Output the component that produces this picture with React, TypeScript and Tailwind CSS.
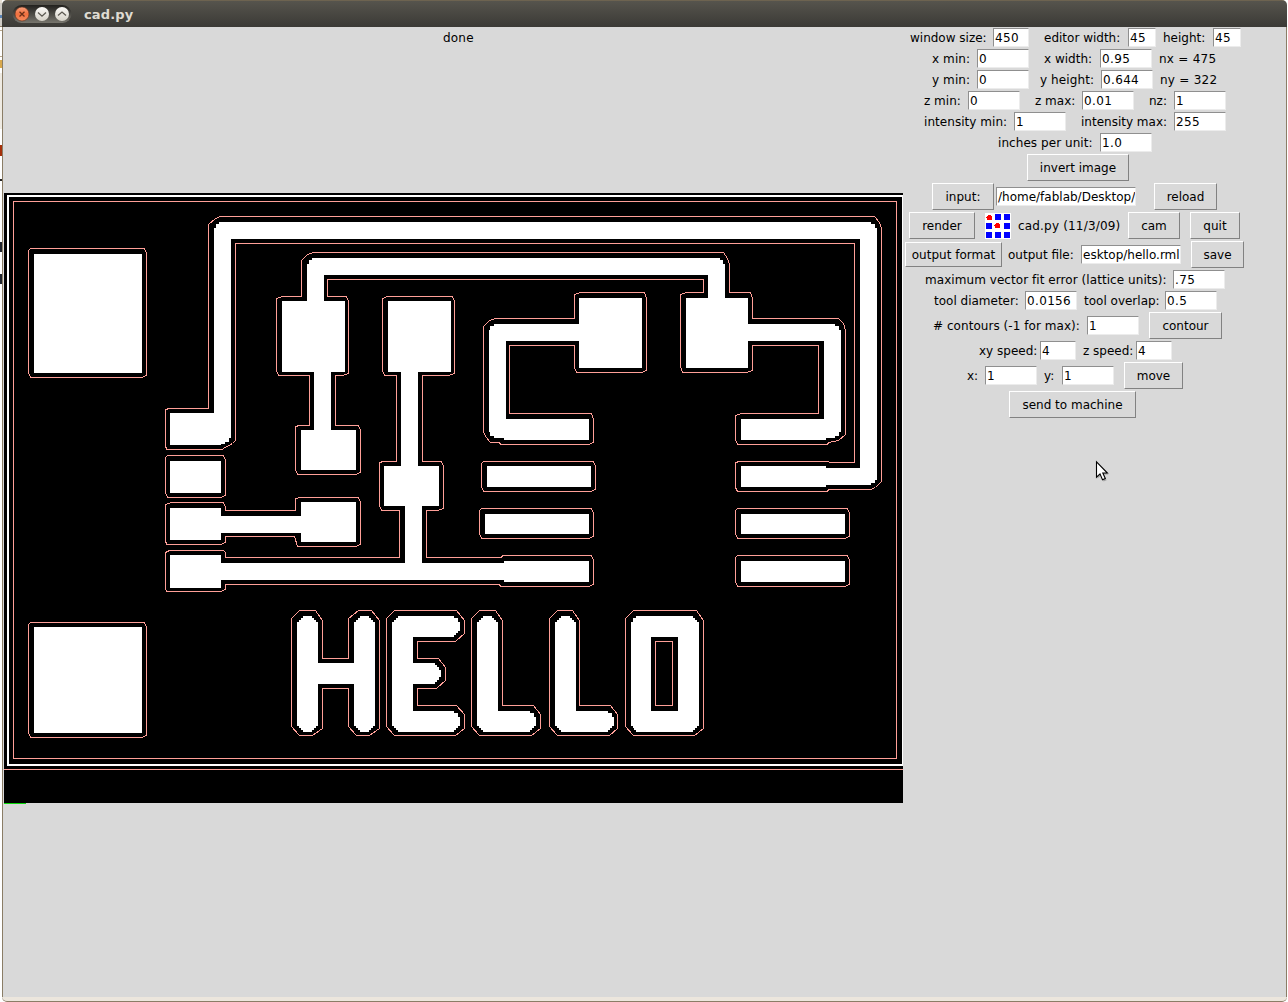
import type { ReactNode } from "react";

function Row({ tall = false, children }: { tall?: boolean; children: ReactNode }) {
  return <div className={`flex shrink-0 items-center ${tall ? "h-[29px]" : "h-[21px]"}`}>{children}</div>;
}

function Label({ className, children }: { className: string; children: ReactNode }) {
  return <span className={`shrink-0 pt-[2px] whitespace-pre ${className}`}>{children}</span>;
}

function Entry({ className, value, path = false }: { className: string; value: string; path?: boolean }) {
  return (
    <div
      className={`flex h-[19px] shrink-0 items-center overflow-hidden border border-t-[#8f8f8f] border-r-[#ececec] border-b-[#ececec] border-l-[#8f8f8f] bg-white px-px pt-[2px] whitespace-pre ${path ? "" : "tracking-[0.35px]"} ${className}`}
    >
      {value}
    </div>
  );
}

function Button({ className, small = false, children }: { className: string; small?: boolean; children: ReactNode }) {
  return (
    <button
      className={`flex shrink-0 items-center justify-center border border-t-white border-r-[#828282] border-b-[#828282] border-l-white bg-[#d9d9d9] pt-[2px] whitespace-pre ${small ? "h-[25px]" : "h-[27px]"} ${className}`}
    >
      {children}
    </button>
  );
}

function LatticeIcon() {
  return (
    <svg className="ml-[10px] size-[26px] shrink-0" viewBox="0 0 26 26" shapeRendering="crispEdges">
      <path fill="#fff" d="M0 0h26v26H0z" />
      <path fill="#00f" d="M10 1h6v6h-6zM19 1h6v6h-6zM1 10h6v6H1zM19 10h6v6h-6zM1 19h6v6H1zM10 19h6v6h-6zM19 19h6v6h-6z" />
      <path fill="#f00" d="M3 2h3v1h1v4H2V5H1V4h1V3h1zM11 10h3v1h1v4h-5v-2H9v-1h1v-1h1z" />
    </svg>
  );
}

const pads: number[][] = [
  [34, 254, 142, 373],
  [34, 627, 142, 733],
  [170, 461, 221, 493],
  [487, 466, 591, 487],
  [485, 514, 589, 534],
  [741, 514, 845, 534],
  [741, 561, 845, 582],
];

const padContours: number[][] = [
  [28, 248, 146, 377],
  [28, 622, 146, 737],
  [165, 455, 225, 497],
  [481, 461, 595, 491],
  [479, 508, 593, 538],
  [735, 508, 849, 538],
  [735, 555, 849, 586],
];

const copper = [
  "M219 222H871V224H875V228H877V480H875V483H871V485H826V487H741V466H826V468H860V239H231V438H229V442H225V444H221V445H170V413H214V228H216V224H219Z",
  "M312 258H720V260H723V264H725V298H748V324H835V326H839V330H841V432H839V436H835V438H826V440H741V419H824V341H748V368H686V298H708V275H324V301H345V372H331V430H356V470H301V430H314V372H282V301H307V264H309V260H312Z",
  "M388 301H451V372H418V466H439V506H422V563H504V561H589V582H504V580H221V588H170V555H221V563H405V506H384V466H401V372H388Z",
  "M579 298H642V368H579V341H506V419H589V440H504V438H494V436H490V432H489V330H490V326H494V324H579Z",
  "M170 508H221V516H301V502H356V542H301V533H221V540H170Z",
];

const contours = [
  "220,216 215,218 208,224 208,408 169,408 165,409 165,445 166,449 222,449 223,448 232,443 235,440 235,243 854,243 854,462 829,462 828,461 739,461 735,462 735,487 737,491 827,491 828,489 870,489 875,487 881,481 881,228 879,222 874,216",
  "313,252 307,254 301,260 301,296 282,296 276,298 276,370 278,375 309,375 309,425 299,425 295,426 295,469 297,474 355,474 360,472 360,430 358,425 335,425 335,375 342,375 348,373 348,301 346,296 327,296 327,279 703,279 703,292 686,292 680,294 680,366 682,372 746,372 752,370 752,345 818,345 818,413 741,413 735,415 735,439 737,444 827,444 828,442 838,440 845,434 845,330 843,323 838,318 752,318 752,298 750,292 729,292 729,264 727,258 723,252",
  "387,296 382,298 382,370 384,375 396,375 396,461 383,461 379,462 379,505 381,510 399,510 399,557 225,557 225,552 223,550 169,550 165,552 165,588 166,591 220,591 225,589 225,584 499,584 500,586 588,586 593,584 593,560 591,555 502,555 501,557 426,557 426,510 437,510 443,508 443,466 441,461 422,461 422,375 448,375 454,373 454,301 452,296",
  "580,292 574,294 574,318 495,318 489,320 483,326 483,431 485,436 490,442 499,442 500,444 588,444 593,442 593,419 591,413 509,413 509,345 574,345 574,367 576,372 641,372 646,370 646,298 644,292",
  "171,502 165,504 165,540 166,544 220,544 225,542 225,536 294,536 297,546 355,546 360,544 360,502 358,497 300,497 295,498 295,510 225,510 225,507 223,502",
  "299,610 291,618 291,726 299,735 312,735 322,728 322,688 348,688 348,726 356,735 369,735 379,728 379,620 371,610 358,610 348,618 348,658 322,658 322,620 315,610",
  "394,610 386,618 386,726 394,735 455,735 464,728 464,714 456,705 417,705 417,688 436,688 445,680 445,667 438,658 417,658 417,641 455,641 464,633 464,620 456,610",
  "479,610 471,618 471,726 479,735 531,735 540,728 540,714 533,705 502,705 502,620 495,610",
  "557,610 549,618 549,726 557,735 609,735 617,728 617,714 610,705 579,705 579,620 572,610",
  "633,610 625,618 625,726 633,735 694,735 703,728 703,620 696,610",
  "655,641 672,641 672,705 655,705",
  "13,201 896,201 896,758 13,758",
];

/* Engraved lettering; every stroke end is stepped in 2px lattice cells. */
const lettering = [
  "M297 622h2v-2h2v-2h2v-2H312v2h2v2h2v2h2V663H354V622h2v-2h2v-2h2v-2H369v2h2v2h2v2h2V726h-2v2h-2v2h-2v2H360v-2h-2v-2h-2v-2h-2V684H318V726h-2v2h-2v2h-2v2H303v-2h-2v-2h-2v-2h-2Z",
  "M392 622h2v-2h2v-2h2v-2H454v2h4v4h2V631h-2v2h-2v2h-2v2H413V663H435v2h2v2h2v3h2V677h-2v3h-2v2h-2v2H413V711H454v2h4v4h2V726h-2v2h-2v2h-2v2H398v-2h-2v-2h-2v-2h-2Z",
  "M477 622h2v-2h2v-2h2v-2H492v2h2v2h2v2h2V711H530v2h4v4h2V726h-2v2h-2v2h-2v2H483v-2h-2v-2h-2v-2h-2Z",
  "M555 622h2v-2h2v-2h2v-2H570v2h2v2h2v2h2V711H608v2h4v4h2V726h-2v2h-2v2h-2v2H561v-2h-2v-2h-2v-2h-2Z",
  "M631 622h2v-4h3v-2H693v2h2v2h2v2h2V726h-2v2h-2v2h-2v2H636v-2h-2v-2h-1v-2h-2ZM651 637V711H678V637Z",
];

function Board() {
  return (
    <svg className="ml-px h-[611px] w-[899px] shrink-0" viewBox="4 193 899 611" shapeRendering="crispEdges">
      <path fill="#000" d="M4 193H903V803H4Z" />
      <path fill="#fff" fillRule="evenodd" d="M7 195H903V766H7ZM9 197V764H902V197Z" />
      <path fill="#0bd80b" d="M4 803H26V804H4Z" />
      <g fill="#fff" fillRule="evenodd">
        {pads.map(([x0, y0, x1, y1]) => (
          <rect key={`${x0}-${y0}`} x={x0} y={y0} width={x1 - x0} height={y1 - y0} />
        ))}
        {copper.map((d) => (
          <path key={d} d={d} />
        ))}
        {lettering.map((d) => (
          <path key={d} d={d} />
        ))}
      </g>
      <g fill="none" stroke="#ff9f98" transform="translate(.5 .5)">
        <path d="M3.5 769H903" />
        {contours.map((points) => (
          <polygon key={points} points={points} />
        ))}
        {padContours.map(([x0, y0, x1, y1]) => (
          <path
            key={`${x0}-${y0}`}
            d={`M${x0 + 2} ${y0}H${x1 - 2}L${x1} ${y0 + 5}V${y1 - 2}L${x1 - 5} ${y1}H${x0 + 2}L${x0} ${y1 - 5}V${y0 + 2}Z`}
          />
        ))}
      </g>
    </svg>
  );
}

function WindowControls() {
  return (
    <svg className="ml-[10px] h-[20px] w-[60px] shrink-0" viewBox="12 4 60 20">
      <defs>
        <linearGradient id="well" x2="0" y2="1">
          <stop stopColor="#22211e" />
          <stop offset="1" stopColor="#77756d" />
        </linearGradient>
        <linearGradient id="close" x2="0" y2="1">
          <stop stopColor="#f8a07c" />
          <stop offset=".5" stopColor="#f0703f" />
          <stop offset="1" stopColor="#f58a5c" />
        </linearGradient>
        <linearGradient id="plain" x2="0" y2="1">
          <stop stopColor="#fbfaf7" />
          <stop offset="1" stopColor="#d5d1c7" />
        </linearGradient>
      </defs>
      <rect x="12.5" y="5" width="59" height="18" rx="9" fill="url(#well)" />
      <circle cx="22" cy="14" r="7" fill="url(#close)" stroke="#5a2b17" strokeWidth=".6" />
      <circle cx="42" cy="14" r="7" fill="url(#plain)" />
      <circle cx="62" cy="14" r="7" fill="url(#plain)" />
      <g fill="none" stroke="#5d5a52" strokeWidth="1.3">
        <path d="M19.5 11.7l5 4.8M24.5 11.7l-5 4.8" stroke="#6b3018" />
        <path d="M38 12.6l4 3.6 4-3.6M58 15.6l4-3.6 4 3.6" />
      </g>
    </svg>
  );
}

/* Sliver of the window lying behind this one, visible past the left frame. */
function BackWindowEdge() {
  return (
    <div className="flex w-[2px] shrink-0 flex-col bg-white">
      <div className="h-[3px] bg-[#e7e0d4]" />
      <div className="h-[12px] bg-[#cfccc6]" />
      <div className="h-[3px] bg-[#5b84b4]" />
      <div className="h-[8px] bg-[#cfccc6]" />
      <div className="h-px bg-[#8d7f68]" />
      <div className="h-[3px] bg-white" />
      <div className="h-px bg-[#b7a78d]" />
      <div className="h-[25px] bg-white" />
      <div className="h-px bg-[#b7a78d]" />
      <div className="h-[3px] bg-white" />
      <div className="h-[8px] bg-[#d9a94d]" />
      <div className="h-[5px] bg-white" />
      <div className="h-[56px] bg-[#efebe3]" />
      <div className="h-[16px] bg-white" />
      <div className="h-[11px] bg-[#a5300a]" />
      <div className="h-[23px] bg-white" />
      <div className="h-[2px] bg-[#222222]" />
      <div className="h-[61px] bg-white" />
      <div className="h-[10px] bg-[#20242c]" />
      <div className="h-[22px] bg-white" />
      <div className="h-[10px] bg-[#20242c]" />
    </div>
  );
}

export default function App() {
  return (
    <div className="relative flex h-[1002px] w-[1288px] overflow-hidden bg-white font-['DejaVu_Sans',sans-serif] text-[12px] leading-[17px] text-black">
      <BackWindowEdge />
      <div className="flex w-[1285px] shrink-0 flex-col overflow-hidden rounded-t-[5px] rounded-b-[5px] border-b border-[#8a7d66] bg-[#ece6dd]">
        <header className="flex h-[27px] shrink-0 items-center border-t border-[#6d6350] bg-linear-to-b from-[#56544d] to-[#3b3a36]">
          <WindowControls />
          <span className="ml-[12px] text-[13px] font-bold tracking-[0.15px] text-[#dfdbd2]">cad.py</span>
        </header>
        <main className="flex h-[970px] shrink-0 border-x border-[#8a7d66] bg-[#d9d9d9]">
          <section className="flex w-[900px] shrink-0 flex-col">
            <div className="flex h-[21px] items-center pt-[2px] pl-[440px] tracking-[0.2px]">done</div>
            <div className="h-[145px] shrink-0" />
            <Board />
          </section>

          <section className="flex flex-1 flex-col">
            <Row>
              <Label className="ml-[7px] w-[83px]">window size:</Label>
              <Entry className="w-[36px]" value="450" />
              <Label className="ml-[15px] w-[84px]">editor width:</Label>
              <Entry className="w-[28px]" value="45" />
              <Label className="ml-[7px] w-[50px]">height:</Label>
              <Entry className="w-[28px]" value="45" />
            </Row>
            <Row>
              <Label className="ml-[29px] w-[45px] tracking-[0.1px]">x min:</Label>
              <Entry className="w-[52px]" value="0" />
              <Label className="ml-[15px] w-[56px]">x width:</Label>
              <Entry className="w-[52px]" value="0.95" />
              <Label className="ml-[7px] tracking-[0.25px]">nx = 475</Label>
            </Row>
            <Row>
              <Label className="ml-[29px] w-[45px] tracking-[0.1px]">y min:</Label>
              <Entry className="w-[52px]" value="0" />
              <Label className="ml-[11px] w-[61px] tracking-[0.1px]">y height:</Label>
              <Entry className="w-[52px]" value="0.644" />
              <Label className="ml-[7px] tracking-[0.25px]">ny = 322</Label>
            </Row>
            <Row>
              <Label className="ml-[21px] w-[44px]">z min:</Label>
              <Entry className="w-[52px]" value="0" />
              <Label className="ml-[15px] w-[47px]">z max:</Label>
              <Entry className="w-[52px]" value="0.01" />
              <Label className="ml-[15px] w-[25px]">nz:</Label>
              <Entry className="w-[52px]" value="1" />
            </Row>
            <Row>
              <Label className="ml-[21px] w-[90px] tracking-[0.05px]">intensity min:</Label>
              <Entry className="w-[52px]" value="1" />
              <Label className="ml-[15px] w-[93px]">intensity max:</Label>
              <Entry className="w-[52px]" value="255" />
            </Row>
            <Row>
              <Label className="ml-[95px] w-[102px] tracking-[0.06px]">inches per unit:</Label>
              <Entry className="w-[52px]" value="1.0" />
            </Row>
            <Row tall>
              <Button className="ml-[124px] w-[102px]">invert image</Button>
            </Row>
            <Row tall>
              <Button className="ml-[29px] w-[62px]">input:</Button>
              <Entry className="ml-[2px] w-[140px]" value="/home/fablab/Desktop/" path />
              <Button className="ml-[18px] w-[63px]">reload</Button>
            </Row>
            <Row tall>
              <Button className="ml-[6px] w-[66px]">render</Button>
              <LatticeIcon />
              <Label className="ml-[7px] w-[110px] tracking-[0.18px]">cad.py (11/3/09)</Label>
              <Button className="w-[52px]">cam</Button>
              <Button className="ml-[10px] w-[50px]">quit</Button>
            </Row>
            <Row tall>
              <Button small className="ml-[2px] w-[97px]">output format</Button>
              <Label className="ml-[6px] w-[73px]">output file:</Label>
              <Entry className="w-[100px]" value="esktop/hello.rml" path />
              <Button className="ml-[10px] w-[53px]">save</Button>
            </Row>
            <Row>
              <Label className="ml-[22px] w-[248px] tracking-[0.06px]">maximum vector fit error (lattice units):</Label>
              <Entry className="w-[52px]" value=".75" />
            </Row>
            <Row>
              <Label className="ml-[31px] w-[91px]">tool diameter:</Label>
              <Entry className="w-[52px]" value="0.0156" />
              <Label className="ml-[7px] w-[81px]">tool overlap:</Label>
              <Entry className="w-[52px]" value="0.5" />
            </Row>
            <Row tall>
              <Label className="ml-[30px] w-[154px] tracking-[0.05px]"># contours (-1 for max):</Label>
              <Entry className="w-[52px]" value="1" />
              <Button className="ml-[10px] w-[73px]">contour</Button>
            </Row>
            <Row>
              <Label className="ml-[76px] w-[61px]">xy speed:</Label>
              <Entry className="w-[36px]" value="4" />
              <Label className="ml-[7px] w-[53px]">z speed:</Label>
              <Entry className="w-[36px]" value="4" />
            </Row>
            <Row tall>
              <Label className="ml-[64px] w-[18px]">x:</Label>
              <Entry className="w-[52px]" value="1" />
              <Label className="ml-[7px] w-[18px]">y:</Label>
              <Entry className="w-[52px]" value="1" />
              <Button className="ml-[10px] w-[59px]">move</Button>
            </Row>
            <Row tall>
              <Button className="ml-[106px] w-[127px]">send to machine</Button>
            </Row>
          </section>
        </main>
      </div>
      <svg className="absolute top-[460px] left-[1095px] h-[24px] w-[16px]" viewBox="0 0 16 24">
        <path d="M2.5 3.5v15l3.5-3 2.6 6 3-1.3-2.7-5.7h4.6z" fill="#000" opacity=".25" />
        <path d="M1.5 1.8v15.4l3.5-3.3 2.5 5.8 2.8-1.2-2.5-5.5h4.6z" fill="#fff" stroke="#000" strokeWidth="1.1" />
      </svg>
    </div>
  );
}
